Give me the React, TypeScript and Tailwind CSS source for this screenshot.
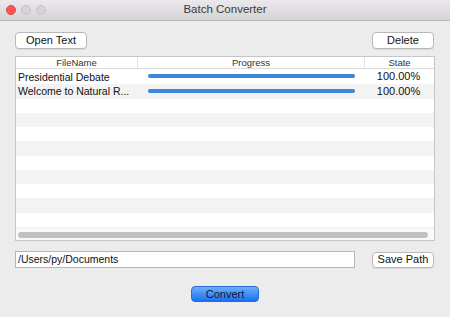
import React from "react";

const rows = [
  { name: "Presidential Debate", progress: 100, state: "100.00%" },
  { name: "Welcome to Natural R...", progress: 100, state: "100.00%" },
];

export default function App() {
  const total = 12;
  const list = Array.from({ length: total }, (_, i) => rows[i] || null);
  return (
    <div
      className="w-[450px] h-[317px] bg-[#ececec] flex flex-col overflow-hidden text-[#111]"
      style={{ fontFamily: '"Liberation Sans", Arial, sans-serif' }}
    >
      {/* title bar */}
      <div className="h-[21px] shrink-0 bg-gradient-to-b from-[#ebe9eb] to-[#d5d3d5] border-b border-[#b9b9b9] flex items-center relative">
        <div className="flex items-center gap-[5px] pl-[6px]">
          <div className="w-[10px] h-[10px] rounded-full bg-[#fc5753] border border-[#df4744]" />
          <div className="w-[10px] h-[10px] rounded-full bg-[#d5d3d5] border border-[#c4c2c4]" />
          <div className="w-[10px] h-[10px] rounded-full bg-[#d5d3d5] border border-[#c4c2c4]" />
        </div>
        <div className="absolute inset-0 flex items-center justify-center text-[11.5px] text-[#3a3a3a]">
          Batch Converter
        </div>
      </div>

      <div className="flex flex-col px-[15px] pt-[11px]">
        {/* top buttons */}
        <div className="flex justify-between">
          <button className="w-[72px] h-[17px] bg-white border border-[#b8b8b8] rounded-[4px] shadow-[0_1px_0_rgba(0,0,0,0.08)] text-[11px] leading-none flex items-center justify-center">
            Open Text
          </button>
          <button className="w-[62px] h-[17px] mr-[1px] bg-white border border-[#b8b8b8] rounded-[4px] shadow-[0_1px_0_rgba(0,0,0,0.08)] text-[11px] leading-none flex items-center justify-center">
            Delete
          </button>
        </div>

        {/* table */}
        <div className="mt-[7px] w-[420px] h-[185px] border border-[#c6c6c6] bg-white flex flex-col">
          <div className="h-[12px] shrink-0 flex border-b border-[#dcdcdc] text-[9.5px] leading-none text-[#333]">
            <div className="w-[122px] border-r border-[#e2e2e2] flex items-center justify-center">FileName</div>
            <div className="w-[227px] border-r border-[#e2e2e2] flex items-center justify-center">Progress</div>
            <div className="flex-1 flex items-center justify-center">State</div>
          </div>
          <div className="flex-1 overflow-hidden flex flex-col">
            {list.map((r, i) => (
              <div
                key={i}
                className={`${i < 2 ? "h-[14.75px]" : "h-[14.25px]"} shrink-0 flex items-center text-[10.5px] leading-none ${i % 2 === 1 ? "bg-[#f3f3f3]" : "bg-white"}`}
              >
                {r && (
                  <>
                    <div className="w-[122px] pl-[2px] whitespace-nowrap pt-[1px]">{r.name}</div>
                    <div className="w-[227px] px-[10px]">
                      <div className="h-[4px] rounded-full bg-[#d6d6d6]">
                        <div className="h-full rounded-full bg-[#3f87dd]" style={{ width: `${r.progress}%` }} />
                      </div>
                    </div>
                    <div className="flex-1 text-center pt-[1px] pr-[2px] text-[11px]">{r.state}</div>
                  </>
                )}
              </div>
            ))}
          </div>
          <div className="h-[12px] shrink-0 bg-[#fafafa] border-t border-[#efefef] flex items-center px-[2px]">
            <div className="h-[6px] w-[410px] rounded-full bg-[#c1c1c1]" />
          </div>
        </div>

        {/* path row */}
        <div className="mt-[10px] flex justify-between items-center">
          <div className="w-[340px] h-[17px] bg-white border border-[#b6b6b6] flex items-center pl-[2px] text-[10.5px]">
            /Users/py/Documents
          </div>
          <button className="w-[62px] h-[16px] mr-[1px] bg-white border border-[#b8b8b8] rounded-[4px] shadow-[0_1px_0_rgba(0,0,0,0.08)] text-[11px] leading-none flex items-center justify-center">
            Save Path
          </button>
        </div>

        {/* convert */}
        <div className="mt-[18px] flex justify-center">
          <button className="w-[68px] h-[16px] rounded-[4px] border border-[#2a6bd8] bg-gradient-to-b from-[#6aaefb] to-[#1a6ff0] text-[11px] leading-none text-[#0c1640] flex items-center justify-center">
            Convert
          </button>
        </div>
      </div>
    </div>
  );
}
